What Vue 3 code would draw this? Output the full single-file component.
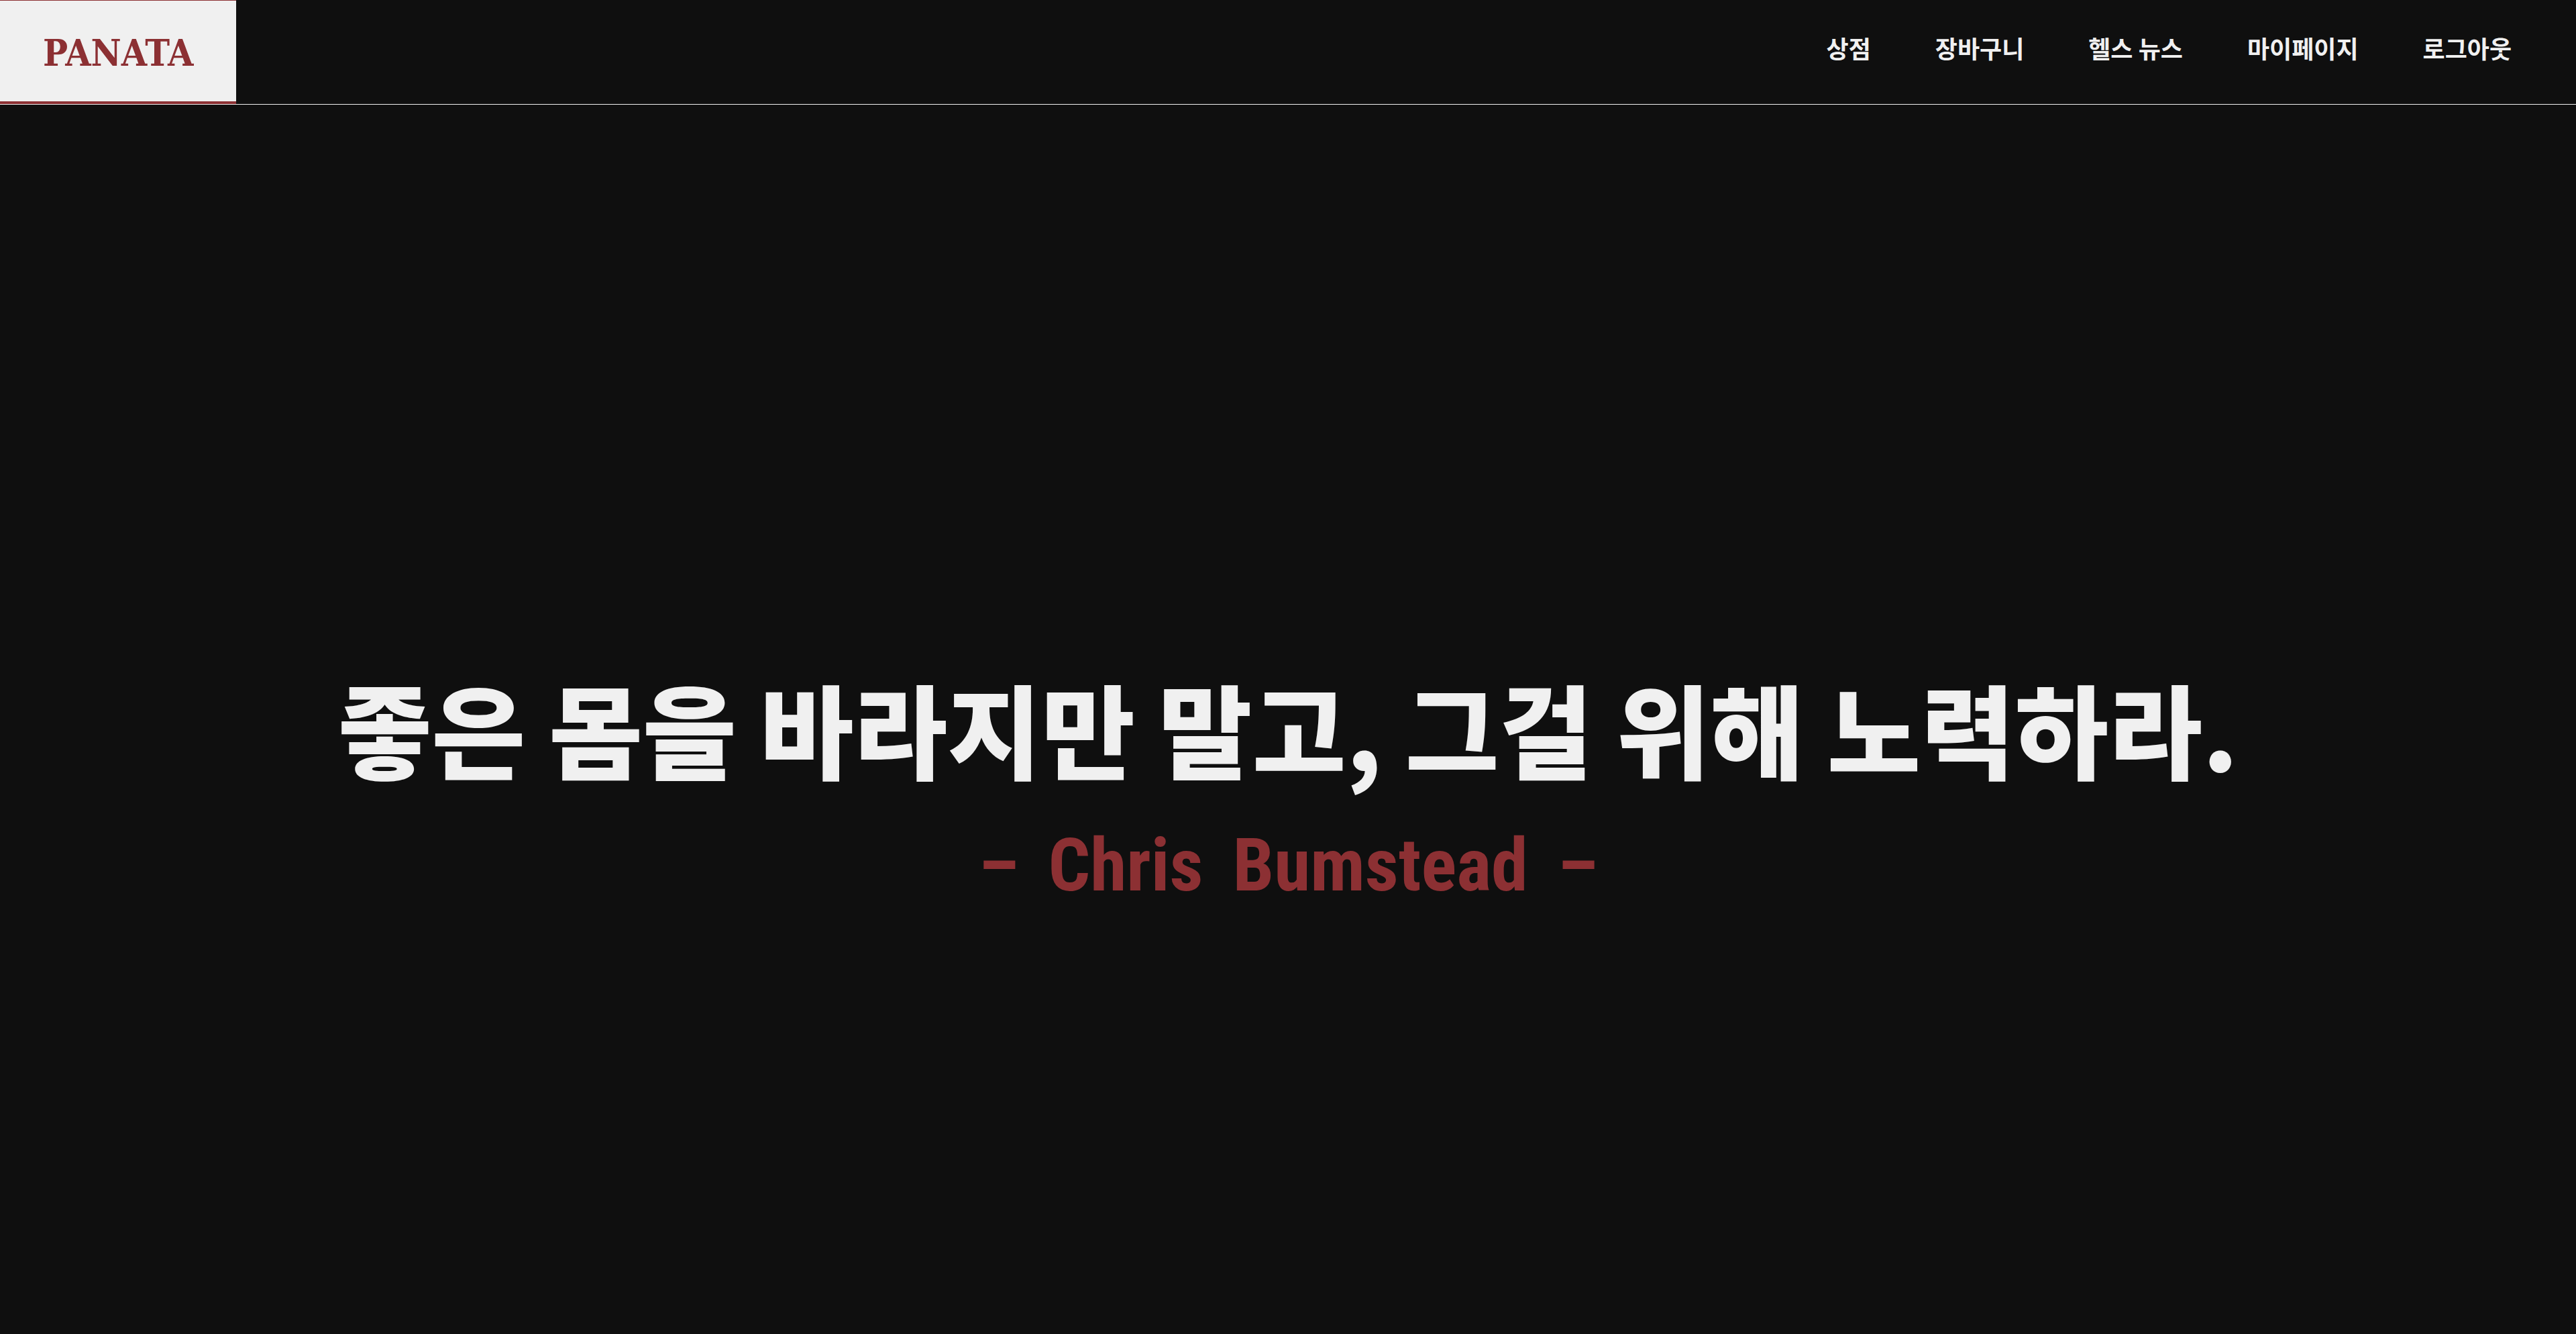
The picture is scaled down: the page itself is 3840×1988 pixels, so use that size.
<script setup>
const links = ['상점', '장바구니', '헬스 뉴스', '마이페이지', '로그아웃']
</script>

<template>
  <div class="page">
    <header class="topbar">
      <a class="logo" href="#">PANATA</a>
      <nav class="menu">
        <a v-for="link in links" :key="link" href="#">{{ link }}</a>
      </nav>
    </header>
    <main class="hero">
      <h1>좋은 몸을 바라지만 말고, 그걸 위해 노력하라.</h1>
      <p class="author">
        <span>–</span>
        <span>Chris</span>
        <span>Bumstead</span>
        <span>–</span>
      </p>
    </main>
  </div>
</template>

<style>
body {
  background: #0f0f0f;
}
</style>

<style scoped>
.page {
  display: flex;
  flex-direction: column;
  box-sizing: border-box;
  min-height: 100vh;
  background: #0f0f0f;
  color: #f0f0f0;
  font-family: "Noto Sans CJK KR", sans-serif;
}

.topbar {
  display: flex;
  justify-content: space-between;
  align-items: stretch;
  border-bottom: 1px solid #f0f0f0;
}

.logo {
  padding: 40px 64px 34px;
  border-top: 1px solid #8c3033;
  border-bottom: 4px solid #8c3033;
  background: #f0f0f0;
  color: #8c3033;
  font: bold 55px/76px "DejaVu Serif Condensed", "DejaVu Serif", serif;
  text-decoration: none;
}

.menu {
  display: flex;
  align-items: center;
  gap: 96px;
  padding: 0 96px 14px;
}

.menu a {
  color: inherit;
  font-size: 36px;
  line-height: 52px;
  font-weight: 700;
  text-decoration: none;
}

.hero {
  flex: 1;
  display: flex;
  flex-direction: column;
  align-items: center;
  justify-content: center;
  gap: 52px;
  padding-top: 204px;
}

h1 {
  margin: 0;
  font-size: 152px;
  line-height: 180px;
  font-weight: 900;
}

.author {
  display: flex;
  gap: 44px;
  margin: 0;
  color: #8c3033;
  font: bold 110px/128px "Roboto Condensed", Roboto, sans-serif;
}
</style>
